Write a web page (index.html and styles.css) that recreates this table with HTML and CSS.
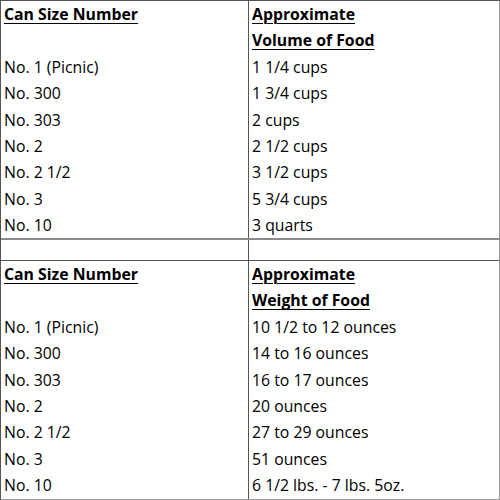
FILE: index.html
```html
<!DOCTYPE html>
<html>
<head>
<meta charset="utf-8">
<link rel="stylesheet" href="styles.css">
</head>
<body>
<div class="sheet">
  <div class="block">
    <div class="col left">
      <div class="line head">Can Size Number</div>
      <div class="line"></div>
      <div class="line">No. 1 (Picnic)</div>
      <div class="line">No. 300</div>
      <div class="line">No. 303</div>
      <div class="line">No. 2</div>
      <div class="line">No. 2 1/2</div>
      <div class="line">No. 3</div>
      <div class="line">No. 10</div>
    </div>
    <div class="col right">
      <div class="line head">Approximate</div>
      <div class="line head">Volume of Food</div>
      <div class="line">1 1/4 cups</div>
      <div class="line">1 3/4 cups</div>
      <div class="line">2 cups</div>
      <div class="line">2 1/2 cups</div>
      <div class="line">3 1/2 cups</div>
      <div class="line">5 3/4 cups</div>
      <div class="line">3 quarts</div>
    </div>
  </div>
  <div class="spacer">
    <div class="col left"></div>
    <div class="col right"></div>
  </div>
  <div class="block">
    <div class="col left">
      <div class="line head">Can Size Number</div>
      <div class="line"></div>
      <div class="line">No. 1 (Picnic)</div>
      <div class="line">No. 300</div>
      <div class="line">No. 303</div>
      <div class="line">No. 2</div>
      <div class="line">No. 2 1/2</div>
      <div class="line">No. 3</div>
      <div class="line">No. 10</div>
    </div>
    <div class="col right">
      <div class="line head">Approximate</div>
      <div class="line head">Weight of Food</div>
      <div class="line">10 1/2 to 12 ounces</div>
      <div class="line">14 to 16 ounces</div>
      <div class="line">16 to 17 ounces</div>
      <div class="line">20 ounces</div>
      <div class="line">27 to 29 ounces</div>
      <div class="line">51 ounces</div>
      <div class="line">6 1/2 lbs. - 7 lbs. 5oz.</div>
    </div>
  </div>
</div>
</body>
</html>
```
FILE: styles.css
```css
html, body {
  margin: 0;
  padding: 0;
  background: #ffffff;
}
.sheet {
  width: 498px;
  height: 498px;
  border-top: 1px solid #555;
  border-left: 1px solid #555;
  border-right: 2px solid #999;
  border-bottom: 2px solid #999;
  box-sizing: content-box;
  display: flex;
  flex-direction: column;
  font-family: "Open Sans", "Noto Sans", sans-serif;
  font-size: 15.8px;
  color: #000;
  overflow: hidden;
}
.block {
  display: grid;
  grid-template-columns: 248px 1fr;
  height: 237px;
}
.spacer {
  display: grid;
  grid-template-columns: 248px 1fr;
  height: 20px;
  border-top: 2px solid #8a8a8a;
  border-bottom: 1px solid #555;
}
.col.left {
  border-right: 1px solid #555;
  padding-left: 3px;
}
.col.right {
  padding-left: 3px;
}
.line {
  height: 26.4px;
  line-height: 26.4px;
  white-space: nowrap;
}
.head {
  font-weight: bold;
  text-decoration: underline;
  text-decoration-thickness: 1px;
  text-underline-offset: 3px;
}
```
